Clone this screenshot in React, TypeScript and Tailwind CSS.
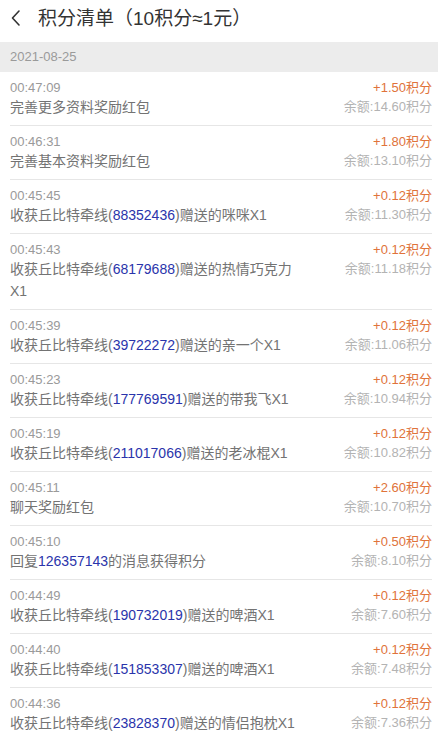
import React from "react";

type Row = {
  time: string;
  pre: string;
  id?: string;
  post?: string;
  amount: string;
  balance: string;
};

const rows: Row[] = [
  { time: "00:47:09", pre: "完善更多资料奖励红包", amount: "+1.50积分", balance: "余额:14.60积分" },
  { time: "00:46:31", pre: "完善基本资料奖励红包", amount: "+1.80积分", balance: "余额:13.10积分" },
  { time: "00:45:45", pre: "收获丘比特牵线(", id: "88352436", post: ")赠送的咪咪X1", amount: "+0.12积分", balance: "余额:11.30积分" },
  { time: "00:45:43", pre: "收获丘比特牵线(", id: "68179688", post: ")赠送的热情巧克力X1", amount: "+0.12积分", balance: "余额:11.18积分" },
  { time: "00:45:39", pre: "收获丘比特牵线(", id: "39722272", post: ")赠送的亲一个X1", amount: "+0.12积分", balance: "余额:11.06积分" },
  { time: "00:45:23", pre: "收获丘比特牵线(", id: "177769591", post: ")赠送的带我飞X1", amount: "+0.12积分", balance: "余额:10.94积分" },
  { time: "00:45:19", pre: "收获丘比特牵线(", id: "211017066", post: ")赠送的老冰棍X1", amount: "+0.12积分", balance: "余额:10.82积分" },
  { time: "00:45:11", pre: "聊天奖励红包", amount: "+2.60积分", balance: "余额:10.70积分" },
  { time: "00:45:10", pre: "回复", id: "126357143", post: "的消息获得积分", amount: "+0.50积分", balance: "余额:8.10积分" },
  { time: "00:44:49", pre: "收获丘比特牵线(", id: "190732019", post: ")赠送的啤酒X1", amount: "+0.12积分", balance: "余额:7.60积分" },
  { time: "00:44:40", pre: "收获丘比特牵线(", id: "151853307", post: ")赠送的啤酒X1", amount: "+0.12积分", balance: "余额:7.48积分" },
  { time: "00:44:36", pre: "收获丘比特牵线(", id: "23828370", post: ")赠送的情侣抱枕X1", amount: "+0.12积分", balance: "余额:7.36积分" },
];

export default function App() {
  return (
    <div
      className="w-[438px] h-[740px] overflow-hidden bg-white"
      style={{ fontFamily: '"Liberation Sans", "Noto Sans CJK SC", sans-serif' }}
    >
      <div className="h-[42px] flex items-center pl-[10px] pb-[6px]">
        <svg width="12" height="18" viewBox="0 0 12 18" className="mr-[16px]">
          <path d="M9 2 L2.5 9 L9 16" fill="none" stroke="#333" strokeWidth="1.6" strokeLinecap="round" strokeLinejoin="round" />
        </svg>
        <span className="text-[19px] text-[#333] leading-none">积分清单（10积分≈1元）</span>
      </div>
      <div className="h-[30px] bg-[#ececec] flex items-center pl-[10px] text-[13px] text-[#9a9a9a]">
        2021-08-25
      </div>
      <div>
        {rows.map((r, i) => (
          <div key={i} className="ml-[10px] mr-[6px] border-b border-[#e6e6e6] flex justify-between pt-[7px] pb-[7px]">
            <div className="w-[292px]">
              <div className="text-[13px] leading-[17px] text-[#9a9a9a]">{r.time}</div>
              <div className="text-[14px] leading-[22px] text-[#737373]">
                {r.pre}
                {r.id && <span className="text-[#2a34ab]">{r.id}</span>}
                {r.post}
              </div>
            </div>
            <div className="flex flex-col items-end">
              <div className="text-[13px] leading-[17px] text-[#e0733a]">{r.amount}</div>
              <div className="text-[13px] leading-[22px] text-[#b3b3b3]">{r.balance}</div>
            </div>
          </div>
        ))}
      </div>
    </div>
  );
}
